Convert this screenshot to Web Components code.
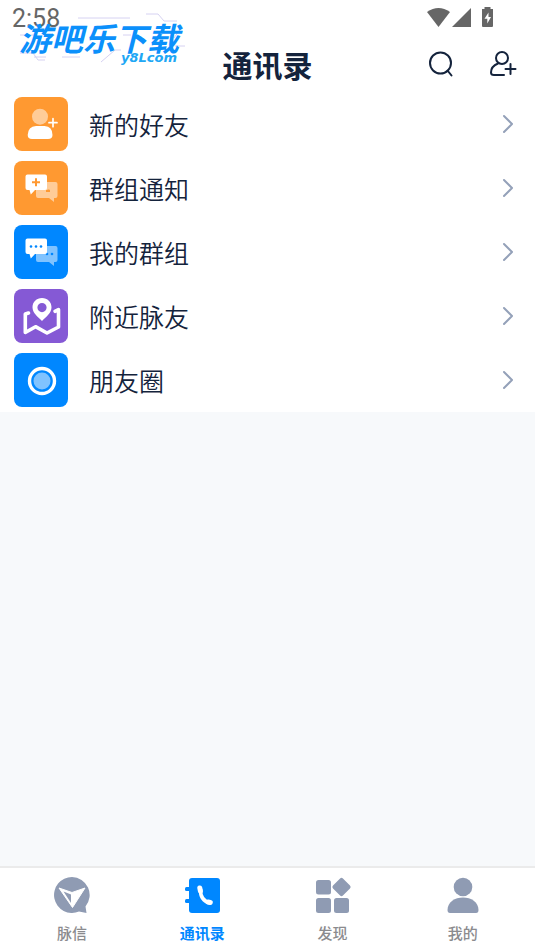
<!DOCTYPE html>
<html lang="zh-CN">
<head>
<meta charset="utf-8">
<meta name="viewport" content="width=device-width, initial-scale=1">
<title>通讯录</title>
<style>
html, body { margin: 0; }
body { font-family: "Noto Sans CJK SC", sans-serif; color: #14233c; background: #f7f9fb; }
</style>
</head>
<body>
<contacts-app></contacts-app>
<script>
const define = (name, html) => customElements.define(name, class extends HTMLElement {
  constructor() {
    super();
    const t = document.createElement('template');
    t.innerHTML = html;
    this.attachShadow({ mode: 'open' }).append(t.content.cloneNode(true));
  }
});

define('status-bar', `
<style>
:host { display: flex; justify-content: space-between; align-items: flex-start; height: 36px; padding: 0 40px 0 12px; color: #666; box-sizing: border-box; }
time { font: 400 25px/38px Roboto, sans-serif; }
svg { display: block; margin-top: 6px; }
</style>
<time>2:58</time>
<svg width="68" height="22" viewBox="0 0 68 22" fill="currentColor" aria-hidden="true">
<path d="M0 6Q11.500-2 23 6L11.500 21Z"/><path d="M44 2V21H25Z"/>
<path fill-rule="evenodd" d="M57.500 1H63.500V3H66V20Q66 21 65 21H56Q55 21 55 20V3H57.500ZM61.500 6.500L57.500 12.800H60.300V17.500L64 11H61.500Z"/>
</svg>`);

define('site-mark', `
<style>
:host { position: absolute; left: 18px; top: 11px; width: 168px; height: 56px; pointer-events: none; font-style: italic; font-weight: 700; }
svg { position: absolute; inset: 0; }
.name { position: absolute; left: 1px; top: 4px; font-size: 32px; line-height: 44px; white-space: nowrap; color: #0b90fb; }
.site { position: absolute; right: 9px; top: 38px; font: italic 700 13px/18px "DejaVu Sans", sans-serif; color: #20a7f5; }
</style>
<svg width="168" height="56" viewBox="0 0 168 56" fill="none" stroke="#d6d2f2" aria-hidden="true">
<path d="M60 7H112M128 3H140L146 10H159M2 24H18M2 42H15L20 49H27M16 46H28M44 46H62M105 24H113M83 51L97 39H103M157 35H167M156 27L163 17"/>
</svg>
<span class="name">游吧乐下载</span><span class="site">y8Lcom</span>`);

define('page-header', `
<style>
:host { display: grid; grid-template-columns: 1fr auto 1fr; align-items: center; height: 56px; padding: 0 12px; }
h1 { grid-column: 2; margin: 0; font-size: 30px; line-height: 40px; font-weight: 700; }
nav { display: flex; justify-content: flex-end; gap: 22px; }
button { border: 0; padding: 0; width: 40px; height: 40px; background: none; color: inherit; display: grid; place-items: center; }
</style>
<h1><slot></slot></h1>
<nav>
<button aria-label="搜索"><svg width="28" height="28" viewBox="0 0 28 28" fill="none" stroke="currentColor" stroke-width="2" stroke-linecap="round"><circle cx="13.500" cy="13" r="10.500"/><path d="M20.500 20.500L24.500 25.500"/></svg></button>
<button aria-label="添加好友"><svg width="28" height="28" viewBox="0 0 28 28" fill="none" stroke="currentColor" stroke-width="2" stroke-linecap="round" stroke-linejoin="round"><circle cx="13" cy="8" r="6"/><path d="M9 13.500C4 15.500 2 19 2 22.500Q2 25 5 25H15M21.500 14V24M16.500 19H26.500"/></svg></button>
</nav>`);

define('contact-row', `
<style>
:host { display: block; }
a { display: flex; align-items: center; height: 64px; padding: 0 20px 0 14px; color: inherit; text-decoration: none; box-sizing: border-box; }
.label { flex: 1; margin-left: 21px; font-size: 25px; line-height: 36px; font-weight: 350; }
::slotted(svg) { display: block; border-radius: 8px; background: var(--tile); }
</style>
<a href="#"><slot name="icon"></slot><span class="label"><slot></slot></span>
<svg width="14" height="20" viewBox="0 0 14 20" fill="none" stroke="#94a1b9" stroke-width="2" stroke-linecap="round" stroke-linejoin="round" aria-hidden="true"><path d="M3 2L11 10L3 18"/></svg></a>`);

define('tab-item', `
<style>
:host { display: block; flex: 1; color: #8b8b8e; font-weight: 500; }
:host([active]) { color: #0087ff; font-weight: 700; }
a { display: flex; flex-direction: column; align-items: center; color: inherit; text-decoration: none; padding-top: 8px; }
.label { font-size: 15px; line-height: 22px; margin-top: 8px; }
::slotted(svg) { display: block; }
</style>
<a href="#"><slot name="icon"></slot><span class="label"><slot></slot></span></a>`);

define('tab-bar', `
<style>
:host { display: flex; height: 83px; padding: 0 7px; background: #fff; border-top: 2px solid #ebebeb; }
</style><slot></slot>`);

const bubbles = (back, front) => `
<path opacity=".5" fill="#fff" d="M24 21H41.500Q43.500 21 43.500 23V35Q43.500 37 41.500 37H40V41L35 37H24Q22 37 22 35V23Q22 21 24 21Z"/>
${back}
<path fill="#fff" d="M13.500 13.500H31Q33 13.500 33 15.500V27Q33 29 31 29H21L16.800 33.500L15.500 29H13.500Q11.500 29 11.500 27V15.500Q11.500 13.500 13.500 13.500Z"/>
${front}`;

define('contacts-app', `
<style>
:host { display: flex; flex-direction: column; min-height: 100vh; position: relative; }
.top, .list { background: #fff; }
main { flex: 1; }
</style>
<div class="top"><status-bar></status-bar><page-header>通讯录</page-header></div>
<main><div class="list">
<contact-row style="--tile:#ff9931">新的好友<svg slot="icon" width="54" height="54" viewBox="0 0 54 54" fill="#fff"><circle cx="26" cy="19.700" r="8" opacity=".5"/><path d="M22 29H30.500Q38.500 29.500 38.500 38Q38.500 42 34 42H18Q13.700 42 13.700 38Q14 29.500 22 29Z"/><path d="M39 21.700V29.700M35 25.700H43" stroke="#fff" stroke-width="1.700" stroke-linecap="round"/></svg></contact-row>
<contact-row style="--tile:#ff9931">群组通知<svg slot="icon" width="54" height="54" viewBox="0 0 54 54">${bubbles('<path d="M32 30H36M34.500 28.500V31" stroke="#ff9931" stroke-width="2"/>', '<path d="M22 17.300V25.300M18 21.300H26" stroke="#ff9931" stroke-width="2"/>')}</svg></contact-row>
<contact-row style="--tile:#0087ff">我的群组<svg slot="icon" width="54" height="54" viewBox="0 0 54 54">${bubbles('<g fill="#0087ff"><circle cx="33" cy="29" r="1.300"/><circle cx="38" cy="29" r="1.300"/></g>', '<g fill="#0087ff"><circle cx="17" cy="21.500" r="1.300"/><circle cx="22" cy="21.500" r="1.300"/><circle cx="27" cy="21.500" r="1.300"/></g>')}</svg></contact-row>
<contact-row style="--tile:#8559d5">附近脉友<svg slot="icon" width="54" height="54" viewBox="0 0 54 54"><path fill="#fff" fill-rule="evenodd" d="M28 9C22.500 9 18.500 13 18.500 18.300C18.500 24 23.500 27.500 28 32C32.500 27.500 37.500 24 37.500 18.300C37.500 13 33.500 9 28 9ZM28 14A4.600 4.600 0 1 1 28 23.200A4.600 4.600 0 1 1 28 14Z"/><path fill="none" stroke="#fff" stroke-width="3.600" stroke-linecap="round" stroke-linejoin="round" d="M14.500 24L11.300 25V43.500L21.500 37.700L33 44L44.500 38V20.500L41 22.300"/></svg></contact-row>
<contact-row style="--tile:#0087ff">朋友圈<svg slot="icon" width="54" height="54" viewBox="0 0 54 54"><circle cx="28" cy="28" r="12.500" fill="none" stroke="#fff" stroke-width="3.400"/><circle cx="28" cy="28" r="8.500" fill="#80c3ff"/></svg></contact-row>
</div></main>
<tab-bar>
<tab-item>脉信<svg slot="icon" width="38" height="38" viewBox="0 0 38 38"><path fill="#8f9bb3" d="M19 1A18 18 0 1 0 26 35.600L33.500 37L32.500 30.500A18 18 0 0 0 19 1Z"/><path fill="#fff" stroke="#fff" stroke-width="1" stroke-linejoin="round" d="M6 12L19 16.500L32 12L19.500 31.500Z"/><path fill="#8f9bb3" d="M10.500 15.500L18 18.500V27Z"/></svg></tab-item>
<tab-item active>通讯录<svg slot="icon" width="38" height="38" viewBox="0 0 38 38" fill="#0087ff"><rect x="6" y="2" width="31" height="35" rx="3"/><rect x="2" y="11" width="7" height="4" rx="1.500"/><rect x="2" y="23" width="7" height="4" rx="1.500"/><path fill="none" stroke="#fff" stroke-width="3.600" d="M17.500 13Q17 24.500 27 27"/><path fill="none" stroke="#fff" stroke-width="5" stroke-linecap="round" d="M16.800 12L17.400 15M25 26L27.300 26.500"/></svg></tab-item>
<tab-item>发现<svg slot="icon" width="38" height="38" viewBox="0 0 38 38" fill="#8f9bb3"><rect x="2" y="4" width="15" height="14.500" rx="2.500"/><rect x="2" y="22" width="15" height="15" rx="2.500"/><rect x="20" y="22" width="15" height="15" rx="2.500"/><rect x="20.500" y="4" width="14" height="14" rx="2" transform="rotate(45 27.500 11)"/></svg></tab-item>
<tab-item>我的<svg slot="icon" width="38" height="38" viewBox="0 0 38 38" fill="#8f9bb3"><circle cx="19" cy="11" r="9.300"/><path d="M19 21.500C27 21.500 34.500 26 34.500 34Q34.500 37 32 37H6Q3.500 37 3.500 34C3.500 26 11 21.500 19 21.500Z"/></svg></tab-item>
</tab-bar>
<site-mark></site-mark>`);
</script>
</body>
</html>
